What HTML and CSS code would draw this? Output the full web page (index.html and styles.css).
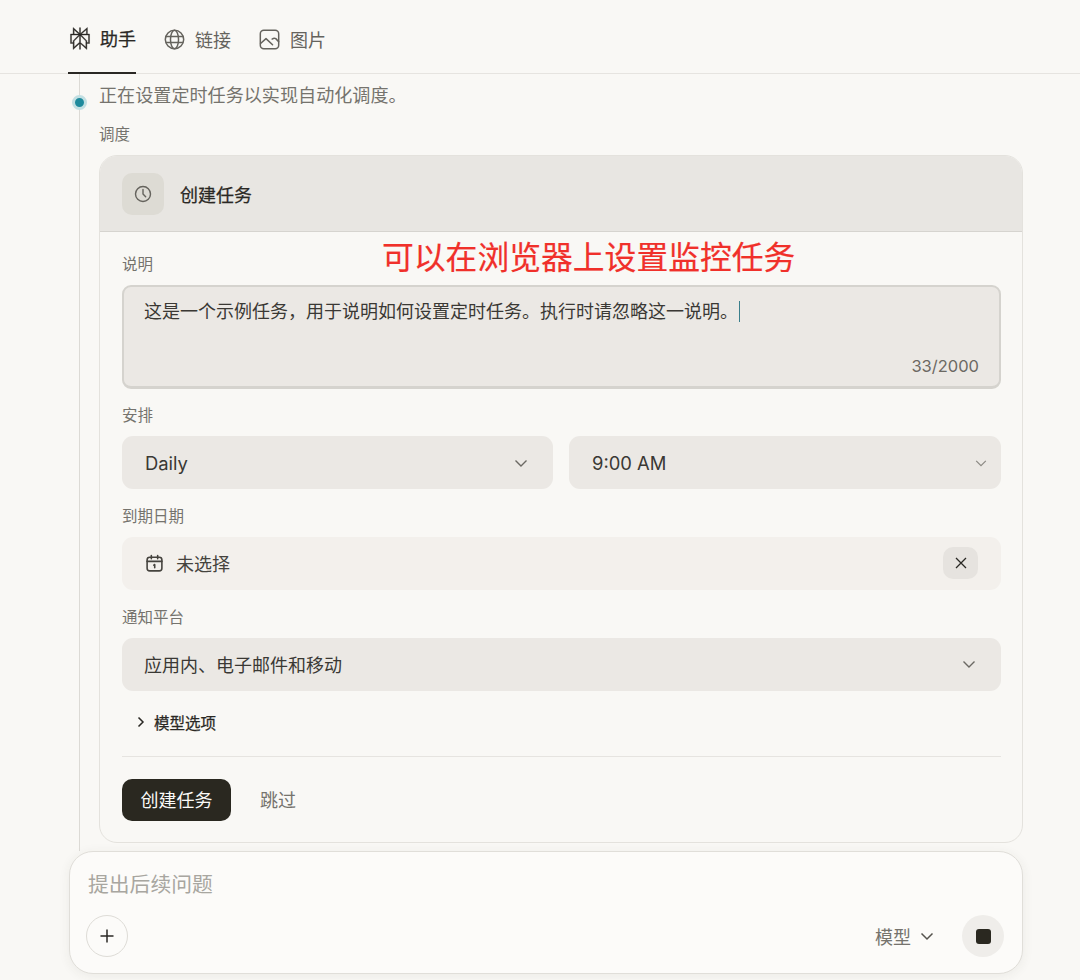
FILE: index.html
```html
<!DOCTYPE html>
<html lang="zh-CN">
<head>
  <meta charset="UTF-8">
  <title>创建任务</title>
  <link rel="stylesheet" href="styles.css">
</head>
<body>

  <nav class="tabs">
    <a class="tab active">
      <svg class="tab-icon logo" viewBox="0 0 24 24" fill="currentColor" stroke="currentColor" stroke-width="0.4">
        <path d="M22.3977 7.0896h-2.3106V.0676l-7.5094 6.3542V.1577h-1.1554v6.1966L4.4904 0v7.0896H1.6023v10.3976h2.8882V24l6.932-6.3591v6.2005h1.1554v-6.0469l6.9318 6.1807v-6.4879h2.8882V7.0896zm-3.4657-4.531v4.531h-5.355l5.355-4.531zm-13.2862.0676 4.8691 4.4634H5.6458V2.6262zM2.7576 16.332V8.245h7.8476l-6.1149 6.1147v1.9723H2.7576zm2.8882 5.0404v-3.8852h.0001v-2.6488l5.7763-5.7764v7.0111l-5.7764 5.2993zm12.7086.0248-5.7766-5.1509V9.0618l5.7766 5.7766v6.5588zm2.8882-5.0652h-1.733v-1.9723L13.3948 8.245h7.8478v8.087z"/>
      </svg>
      助手
    </a>
    <a class="tab">
      <svg class="tab-icon" viewBox="0 0 24 24" fill="none" stroke="currentColor" stroke-width="1.7">
        <circle cx="12" cy="12" r="10.500"/>
        <ellipse cx="12" cy="12" rx="4.600" ry="10.500"/>
        <path d="M2.200 8.500h19.600M2.200 15.500h19.600"/>
      </svg>
      链接
    </a>
    <a class="tab">
      <svg class="tab-icon" viewBox="0 0 24 24" fill="none" stroke="currentColor" stroke-width="1.700" stroke-linejoin="round" stroke-linecap="round">
        <rect x="1.500" y="1.500" width="21" height="21" rx="4"/>
        <path d="M1.800 16.500l6.200-5.500 7.500 7M15 11.500c1.500-1.200 3-1.300 4.200-.5l3.300 3.500"/>
      </svg>
      图片
    </a>
  </nav>

  <main class="timeline">
    <span class="dot"></span>
    <p class="step-text">正在设置定时任务以实现自动化调度。</p>
    <p class="step-label">调度</p>

    <section class="card">
      <header class="card-head">
        <span class="head-icon">
          <svg viewBox="0 0 24 24" fill="none" stroke="currentColor" stroke-width="1.700" stroke-linecap="round" stroke-linejoin="round">
            <circle cx="12" cy="12" r="9"/>
            <path d="M12 6.500V12l3.200 3.200"/>
          </svg>
        </span>
        创建任务
      </header>

      <div class="card-body">
        <label class="field-label">说明</label>
        <div class="textarea">
          <div>这是一个示例任务，用于说明如何设置定时任务。执行时请忽略这一说明。<span class="caret"></span></div>
          <div class="counter">33/2000</div>
        </div>

        <label class="field-label">安排</label>
        <div class="row">
          <div class="select">
            Daily
            <svg class="chevron" viewBox="0 0 16 16"><path d="M2.500 5.500L8 11l5.500-5.500"/></svg>
          </div>
          <div class="select narrow-chevron">
            9:00 AM
            <svg class="chevron light" viewBox="0 0 16 16"><path d="M2.500 5.500L8 11l5.500-5.500"/></svg>
          </div>
        </div>

        <label class="field-label">到期日期</label>
        <div class="select date">
          <span class="date-value">
            <svg class="cal" viewBox="0 0 18 18" fill="none" stroke="currentColor" stroke-width="1.500" stroke-linecap="round" stroke-linejoin="round">
              <rect x="2" y="3" width="14" height="13" rx="2.500"/>
              <path d="M2 7h14M6 1.500v3M12 1.500v3M8.300 10.500L9.200 10v3"/>
            </svg>
            未选择
          </span>
          <span class="clear">
            <svg viewBox="0 0 16 16"><path d="M3 3l10 10M13 3L3 13"/></svg>
          </span>
        </div>

        <label class="field-label">通知平台</label>
        <div class="select">
          应用内、电子邮件和移动
          <svg class="chevron" viewBox="0 0 16 16"><path d="M2.500 5.500L8 11l5.500-5.500"/></svg>
        </div>

        <div class="options">
          <svg viewBox="0 0 12 12"><path d="M3.500 1.500L8 6l-4.500 4.500"/></svg>
          模型选项
        </div>

        <div class="actions">
          <button class="btn-primary">创建任务</button>
          <button class="btn-text">跳过</button>
        </div>
      </div>
    </section>
  </main>

  <section class="composer">
    <div class="placeholder">提出后续问题</div>
    <div class="composer-row">
      <button class="round-btn plus">
        <svg viewBox="0 0 16 16"><path d="M8 1.500v13M1.500 8h13"/></svg>
      </button>
      <div class="composer-right">
        <span class="model">模型
          <svg viewBox="0 0 16 16"><path d="M2.500 5.500L8 11l5.500-5.500"/></svg>
        </span>
        <button class="round-btn stop"><span></span></button>
      </div>
    </div>
  </section>

  <div class="annotation">可以在浏览器上设置监控任务</div>

</body>
</html>
```

FILE: styles.css
```css
* {
  box-sizing: border-box;
}

html, body {
  height: 980px;
  overflow: hidden;
}

body {
  margin: 0;
  position: relative;
  background: #f9f8f5;
  color: #2a2824;
  font-family: Inter, "Noto Sans CJK SC", sans-serif;
}

svg {
  display: block;
}

p {
  margin: 0;
}

/* top tabs */
.tabs {
  display: flex;
  gap: 28px;
  height: 74px;
  padding-left: 68px;
  border-bottom: 1px solid #e6e4e0;
}

.tab {
  display: flex;
  align-items: center;
  gap: 10px;
  height: 74px;
  padding-top: 4px;
  font-size: 18px;
  color: #65635d;
}

.tab.active {
  color: #2a2824;
  -webkit-text-stroke: 0.25px #2a2824;
  border-bottom: 2px solid #2a2824;
}

.tab-icon {
  width: 21px;
  height: 21px;
}

.tab-icon.logo {
  width: 22px;
  height: 23px;
  margin-left: 1px;
  margin-right: -1px;
}

/* step timeline */
.timeline {
  position: relative;
  height: 777px;
  margin-left: 79px;
  padding: 9px 57px 0 19px;
  border-left: 1px solid #dcdad5;
}

.dot {
  position: absolute;
  left: -8px;
  top: 21px;
  width: 15px;
  height: 15px;
  border-radius: 50%;
  background: #1f8a9c;
  border: 3px solid #c2dfe2;
}

.step-text {
  font-size: 18.100px;
  line-height: 24px;
  color: #75736d;
}

.step-label {
  margin-top: 17px;
  font-size: 15.500px;
  line-height: 22px;
  color: #75736d;
}

/* task card */
.card {
  margin-top: 9px;
  border: 1px solid #e4e2dd;
  border-radius: 18px;
  overflow: hidden;
}

.card-head {
  display: flex;
  align-items: center;
  gap: 16px;
  height: 76px;
  padding-left: 22px;
  background: #e8e6e2;
  border-bottom: 1px solid #d6d4cf;
  font-size: 18px;
  -webkit-text-stroke: 0.25px #2a2824;
}

.head-icon {
  display: flex;
  align-items: center;
  justify-content: center;
  width: 42px;
  height: 42px;
  border-radius: 10px;
  background: #dddbd4;
  color: #65635d;
  -webkit-text-stroke: 0;
}

.head-icon svg {
  width: 20px;
  height: 20px;
}

.card-body {
  padding: 21px 21px 21px 22px;
}

.field-label {
  display: block;
  height: 22px;
  margin-bottom: 10px;
  padding-top: 1px;
  font-size: 15.500px;
  line-height: 22px;
  color: #75736d;
}

.textarea {
  position: relative;
  height: 104px;
  margin-bottom: 15px;
  padding: 13px 20px;
  background: #ebe8e4;
  border: 2px solid #d5d3ce;
  border-bottom-width: 3px;
  border-radius: 9px;
  font-size: 18px;
  line-height: 24px;
  color: #3a3834;
}

.caret {
  display: inline-block;
  width: 1px;
  height: 21px;
  margin-left: 1px;
  vertical-align: -4px;
  background: #3a7f8c;
}

.counter {
  position: absolute;
  right: 20px;
  bottom: 9px;
  font-size: 16.500px;
  line-height: 22px;
  color: #6b6963;
}

.row {
  display: grid;
  grid-template-columns: 431px 432px;
  gap: 16px;
  margin-bottom: 16px;
}

.select {
  display: flex;
  align-items: center;
  justify-content: space-between;
  height: 53px;
  padding: 0 24px 1px 22px;
  margin-bottom: 16px;
  background: #ebe8e4;
  border-radius: 11px;
  font-size: 18px;
  color: #3a3834;
}

.row .select {
  margin-bottom: 0;
  padding-top: 1px;
  padding-bottom: 0;
  padding-left: 23px;
  font-size: 18.400px;
}

.row .narrow-chevron {
  padding-right: 13px;
}

.chevron {
  width: 16px;
  height: 16px;
  fill: none;
  stroke: #6b6963;
  stroke-width: 1.400;
}

.chevron.light {
  width: 14px;
  height: 14px;
  stroke: #8c8a84;
}

.select.date {
  padding-right: 23px;
  background: #f3f0ec;
  color: #45433e;
}

.date-value {
  display: flex;
  align-items: center;
  gap: 12px;
}

.cal {
  width: 19px;
  height: 19px;
  margin-left: 1px;
}

.clear {
  display: flex;
  align-items: center;
  justify-content: center;
  width: 35px;
  height: 32px;
  border-radius: 10px;
  background: #e6e3df;
}

.clear svg {
  width: 16px;
  height: 16px;
  fill: none;
  stroke: #2a2824;
  stroke-width: 1.300;
}

.options {
  display: flex;
  align-items: center;
  gap: 7px;
  height: 32px;
  padding: 0 0 2px 13px;
  font-size: 15.500px;
  -webkit-text-stroke: 0.25px #2a2824;
}

.options svg {
  width: 12px;
  height: 12px;
  fill: none;
  stroke: #2a2824;
  stroke-width: 1.500;
}

.actions {
  display: flex;
  align-items: center;
  gap: 29px;
  margin-top: 17px;
  padding-top: 22px;
  border-top: 1px solid #e6e4e0;
}

.actions button {
  padding: 0 0 2px;
  font-family: inherit;
  font-size: 18px;
  border: none;
  cursor: pointer;
}

.btn-primary {
  width: 109px;
  height: 42px;
  border-radius: 10px;
  background: #2a2820;
  color: #fbfaf7;
}

.btn-text {
  background: none;
  color: #75736d;
}

/* bottom input box */
.composer {
  position: absolute;
  left: 69px;
  top: 851px;
  width: 954px;
  height: 123px;
  padding: 18px 18px 15px 16px;
  background: #fcfbf9;
  border: 1px solid #e0ded9;
  border-radius: 24px;
  box-shadow: 0 2px 12px rgba(60, 55, 40, 0.07);
}

.placeholder {
  padding-left: 2px;
  font-size: 20.800px;
  line-height: 30px;
  color: #a8a6a0;
}

.composer-row {
  display: flex;
  align-items: center;
  justify-content: space-between;
  margin-top: 15px;
}

.round-btn {
  display: flex;
  align-items: center;
  justify-content: center;
  width: 42px;
  height: 42px;
  padding: 0;
  border-radius: 50%;
  border: none;
}

.plus {
  background: none;
  border: 1px solid #dedcd7;
}

.plus svg {
  width: 16px;
  height: 16px;
  fill: none;
  stroke: #2a2824;
  stroke-width: 1.500;
}

.composer-right {
  display: flex;
  align-items: center;
  gap: 27px;
}

.model {
  display: flex;
  align-items: center;
  gap: 8px;
  font-size: 18px;
  color: #75736d;
}

.model svg {
  width: 16px;
  height: 16px;
  fill: none;
  stroke: #55534e;
  stroke-width: 1.500;
}

.stop {
  background: #efedea;
}

.stop span {
  width: 15px;
  height: 15px;
  border-radius: 3px;
  background: #2a2820;
}

/* red note pasted over the screenshot */
.annotation {
  position: absolute;
  left: 382px;
  top: 238px;
  font-size: 31.800px;
  line-height: 40px;
  color: #f0302a;
  -webkit-text-stroke: 0.2px #f0302a;
}
```
